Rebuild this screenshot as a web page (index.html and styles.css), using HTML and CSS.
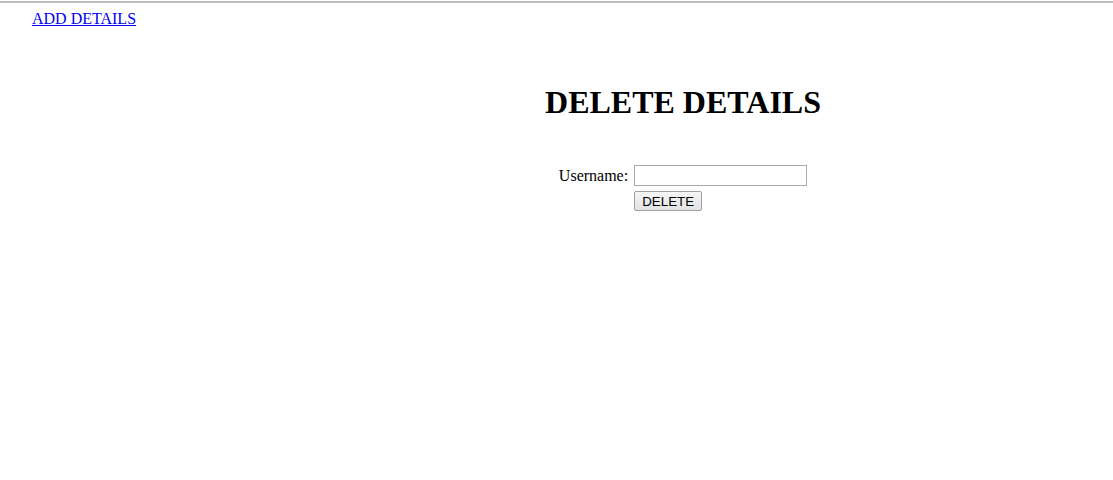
FILE: index.html
```html
<!DOCTYPE html>
<html>
<head>
<meta charset="utf-8">
<title>Delete Details</title>
<link rel="stylesheet" href="styles.css">
</head>
<body>
<div class="rule"></div>
<nav class="nav"><a href="#">ADD DETAILS</a></nav>
<main class="main">
  <h1 class="title">DELETE DETAILS</h1>
  <form class="form">
    <label class="label" for="username">Username:</label>
    <input class="field" id="username" type="text">
    <span></span>
    <button class="btn" type="button">DELETE</button>
  </form>
</main>
</body>
</html>
```

FILE: styles.css
```css
html, body {
  margin: 0;
  background: #ffffff;
}
body {
  font-family: "Liberation Serif", "Times New Roman", serif;
  font-size: 16px;
  color: #000;
}
.rule {
  margin-top: 1px;
  height: 2px;
  background: #bcbcbc;
}
.nav {
  padding: 7px 0 0 32px;
}
.nav a {
  color: #0000ee;
  text-decoration: underline;
}
.main {
  margin-left: 253px;
  padding-top: 56px;
  text-align: center;
}
.title {
  margin: 0;
  font-size: 32px;
  font-weight: bold;
}
.form {
  margin-top: 44px;
  display: grid;
  grid-template-columns: auto auto;
  justify-content: center;
  align-items: center;
  column-gap: 6px;
  row-gap: 5px;
}
.label {
  text-align: right;
}
.field {
  box-sizing: border-box;
  width: 173px;
  height: 21px;
  margin: 0;
  border: 1px solid #a9a9a9;
  padding: 1px 2px;
  font-family: "Liberation Sans", Arial, sans-serif;
  font-size: 13.33px;
}
.btn {
  justify-self: start;
  box-sizing: border-box;
  width: 68px;
  height: 20px;
  margin: 0;
  padding: 0 6px;
  border: 1px solid #a0a0a0;
  border-radius: 2px;
  background: linear-gradient(#f6f6f6, #e2e2e2);
  font-family: "Liberation Sans", Arial, sans-serif;
  font-size: 13.33px;
  color: #000;
}
```
